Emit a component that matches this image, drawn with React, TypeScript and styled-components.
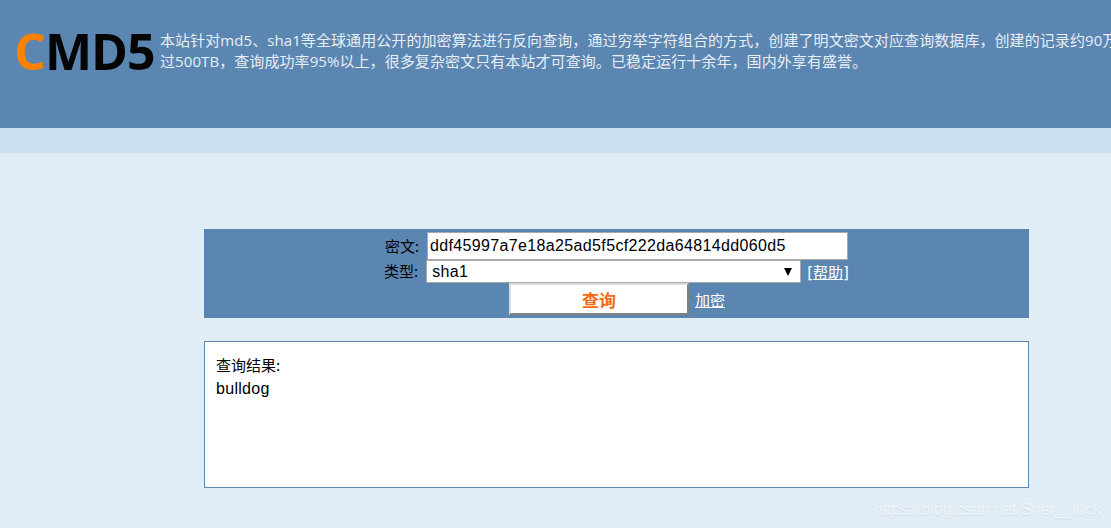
import React from 'react';
import styled, { createGlobalStyle } from 'styled-components';

const GlobalStyle = createGlobalStyle`
  html, body {
    margin: 0;
    padding: 0;
    height: 528px;
    overflow: hidden;
    background: #e1edf6;
    font-family: "Liberation Sans", "Noto Sans CJK SC", sans-serif;
  }
`;

const Page = styled.div`
  position: relative;
  width: 1111px;
  height: 528px;
  overflow: hidden;
`;

const Header = styled.header`
  display: flex;
  align-items: flex-start;
  height: 128px;
  padding: 28px 0 0 14px;
  box-sizing: border-box;
  background: #5b86b2;
`;

const Logo = styled.div`
  flex: none;
  width: 146px;
  font-family: "Open Sans", "Liberation Sans", sans-serif;
  font-size: 50px;
  font-weight: 700;
  line-height: 46px;
  letter-spacing: -1px;
  color: #050505;
`;

const LogoC = styled.span`
  color: #fb8200;
`;

const Intro = styled.p`
  flex: none;
  width: 1000px;
  margin: 2px 0 0;
  font-family: "Open Sans", "Noto Sans CJK SC", sans-serif;
  font-size: 15px;
  letter-spacing: 0.08px;
  line-height: 21px;
  color: #e8eef4;
`;

const Band = styled.div`
  height: 25px;
  background: #cbe0ef;
`;

const Main = styled.main`
  width: 825px;
  margin: 76px 0 0 204px;
`;

const SearchPanel = styled.form`
  height: 89px;
  padding-top: 3px;
  box-sizing: border-box;
  background: #5b86b2;
  text-align: center;
  color: #000;
`;

const Row = styled.div<{ $height: number }>`
  display: flex;
  justify-content: center;
  align-items: center;
  height: ${(p) => p.$height}px;
`;

const Label = styled.label`
  padding-bottom: 2px;
  font-family: "Noto Sans CJK SC", sans-serif;
  font-size: 15px;
  margin-right: 8px;
`;

const HashInput = styled.input`
  width: 421px;
  height: 28px;
  padding: 0 2px;
  box-sizing: border-box;
  border: 1px solid #a9a9a9;
  background: #fff;
  font-family: "Liberation Sans", sans-serif;
  font-size: 16px;
  letter-spacing: 0.35px;
  color: #000;
  outline: none;
`;

const SelectWrap = styled.span`
  position: relative;
  display: inline-block;
  width: 375px;
  height: 23px;
`;

const TypeSelect = styled.select`
  appearance: none;
  display: block;
  width: 100%;
  height: 100%;
  padding: 0 5px;
  box-sizing: border-box;
  border: 1px solid #a9a9a9;
  border-radius: 0;
  background: #fff;
  font-family: "Liberation Sans", sans-serif;
  font-size: 16px;
  letter-spacing: 0.35px;
  color: #000;
`;

const Arrow = styled.svg`
  position: absolute;
  top: 8px;
  right: 9px;
  width: 8px;
  height: 8px;
`;

const WhiteLink = styled.a`
  margin-left: 6px;
  font-family: "DejaVu Sans", "Noto Sans CJK SC", sans-serif;
  font-size: 15px;
  color: #fff;
  text-decoration: underline;
`;

const EncryptLink = styled(WhiteLink)`
  margin-top: 1px;
`;

const QueryButton = styled.button`
  width: 180px;
  height: 32px;
  margin-left: 1px;
  padding: 0;
  box-sizing: border-box;
  border: 2px solid;
  border-color: #dcdcdc #808080 #808080 #dcdcdc;
  background: #fff;
  font-family: "Noto Sans CJK SC", sans-serif;
  font-size: 17px;
  font-weight: 700;
  color: #f96a14;
`;

const ResultBox = styled.section`
  height: 147px;
  margin-top: 23px;
  padding: 12px 11px;
  box-sizing: border-box;
  border: 1px solid #5b86b2;
  background: #fff;
  font-size: 16px;
  letter-spacing: 0.3px;
  line-height: 23px;
  color: #000;
`;

const ResultTitle = styled.div`
  margin: -1px 0 1px;
  font-family: "Noto Sans CJK SC", sans-serif;
  font-size: 15px;
  letter-spacing: 0;
`;

const Watermark = styled.div`
  position: absolute;
  right: 10px;
  bottom: 9px;
  font-family: "Liberation Sans", sans-serif;
  font-size: 16px;
  line-height: 18px;
  color: rgba(255, 255, 255, 0.6);
  text-shadow: 0 1px 1px rgba(0, 0, 0, 0.08);
`;

export default function App() {
  return (
    <Page>
      <GlobalStyle />
      <Header>
        <Logo>
          <LogoC>C</LogoC>MD5
        </Logo>
        <Intro>
          本站针对md5、sha1等全球通用公开的加密算法进行反向查询，通过穷举字符组合的方式，创建了明文密文对应查询数据库，创建的记录约90万
          <br />
          过500TB，查询成功率95%以上，很多复杂密文只有本站才可查询。已稳定运行十余年，国内外享有盛誉。
        </Intro>
      </Header>
      <Band />
      <Main>
        <SearchPanel onSubmit={(e) => e.preventDefault()}>
          <Row $height={28}>
            <Label htmlFor="hash">密文:</Label>
            <HashInput id="hash" readOnly value="ddf45997a7e18a25ad5f5cf222da64814dd060d5" />
          </Row>
          <Row $height={23}>
            <Label htmlFor="type">类型:</Label>
            <SelectWrap>
              <TypeSelect id="type" defaultValue="sha1">
                <option value="sha1">sha1</option>
                <option value="md5">md5</option>
              </TypeSelect>
              <Arrow viewBox="0 0 8 8">
                <path d="M0 0h8L4 8z" fill="#000" />
              </Arrow>
            </SelectWrap>
            <WhiteLink href="#">[帮助]</WhiteLink>
          </Row>
          <Row $height={32}>
            <QueryButton type="submit">查询</QueryButton>
            <EncryptLink href="#">加密</EncryptLink>
          </Row>
        </SearchPanel>
        <ResultBox>
          <ResultTitle>查询结果:</ResultTitle>
          <div>bulldog</div>
        </ResultBox>
      </Main>
      <Watermark>https://blog.csdn.net/Sher__lock</Watermark>
    </Page>
  );
}
